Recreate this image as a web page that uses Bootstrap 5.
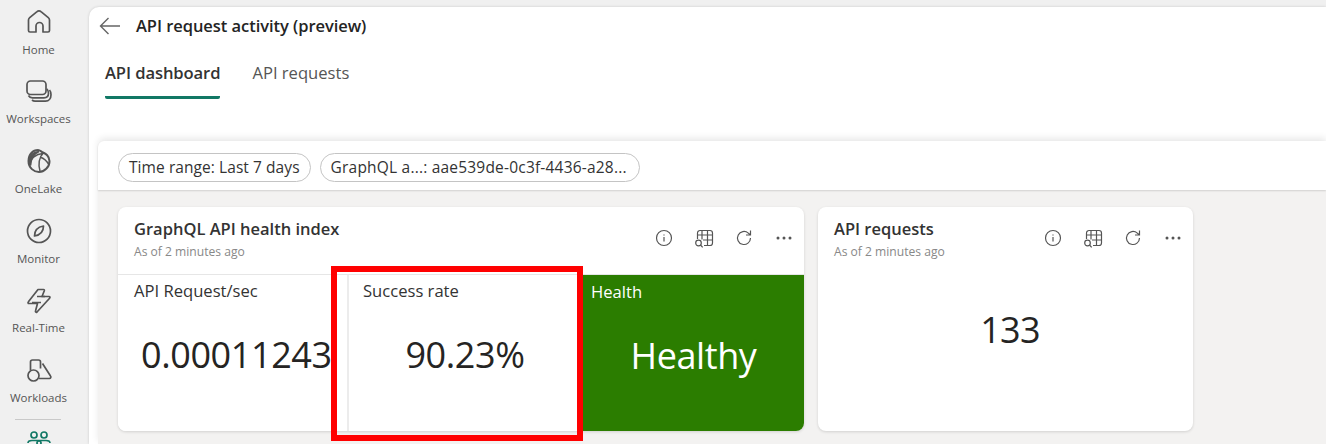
<!DOCTYPE html>
<html lang="en">
<head>
<meta charset="utf-8">
<title>API request activity</title>
<link href="https://cdn.jsdelivr.net/npm/bootstrap@5.3.0/dist/css/bootstrap.min.css" rel="stylesheet">
<style>
html,body{height:444px;overflow:hidden}
body{background:#f0f0f0;font-family:"Open Sans","Noto Sans",sans-serif;color:#242424;position:relative}
.shell{height:444px}
.rail{width:89px;flex:none;overflow:hidden}
.rail-item{height:69.7px;width:77px;color:#555;flex:none}
.rail-item svg{width:30px;height:30px;margin-top:7px;stroke:#555;fill:none;stroke-width:1.7;flex:none}
.rail-item span{font-size:11.5px;line-height:14px;margin-top:5.500px;white-space:nowrap}
.rail-rule{width:46px;height:1px;background:#c9c9c9;margin:1px 0 10px 15px;flex:none}
.rail-people svg{margin-top:0;stroke:#117865;width:24px;height:24px}
.content{min-width:0;margin-top:7px;background:#fff;border-top-left-radius:10px;box-shadow:0 0 3px rgba(0,0,0,.16)}
.head{height:125px}
.title-row{padding:9px 0 0 10px;height:52px}
.title-row svg{width:22px;height:20px;stroke:#666;fill:none;stroke-width:1.4}
.title-row h1{font-size:16.5px;font-weight:600;margin:0 0 0 15px;line-height:20px;letter-spacing:-.05px}
.tabs-row{padding-left:16px;gap:32px}
.tab-item{font-size:16.6px;line-height:21px;padding:3px 0 13px;color:#555}
.tab-on{font-weight:600;color:#333;border-bottom:3px solid #117865;border-radius:0 0 2px 2px;letter-spacing:-.1px}
.dash{margin:9px 0 0 9px;background:#f3f2f1;height:303px;border-top-left-radius:6px;box-shadow:0 -3px 7px rgba(0,0,0,.09)}
.filters{background:#fff;height:49px;padding:12px 0 0 20px;gap:10px;border-top-left-radius:6px;box-shadow:0 1px 2px rgba(0,0,0,.14)}
.chip{height:29px;border:1px solid #c4c4c4;border-radius:15px;font-size:15.5px;line-height:27px;padding:0 10px;color:#333;white-space:nowrap;letter-spacing:.07px}
.chip-long{width:320px;letter-spacing:.2px;margin-left:-1px}
.tiles{padding:17px 0 0 20px;gap:14px}
.pane{background:#fff;border-radius:8px;height:224px;box-shadow:0 1px 3px rgba(0,0,0,.14);overflow:hidden}
.pane-a{width:686px}
.pane-b{width:375px}
.pane-head{height:67px;padding:11px 9px 0 16px}
.pane-head h2{font-size:16.5px;font-weight:600;margin:0;line-height:21px;color:#333}
.pane-head small{display:block;font-size:12.1px;line-height:14px;color:#888;margin-top:6px}
.tools{gap:18px;margin-top:9px}
.tools svg{width:22px;height:22px;stroke:#555;fill:none;stroke-width:1.2}
.cells{height:157px;border-top:1px solid #e6e6e6}
.cell{width:229px;padding:6px 0 0 16px;background:#fff;flex:none}
.cell-mid{border-left:2px solid #ececec;width:230px;padding-left:14px}
.cell-good{background:#2b7d00;color:#fff;flex:1 1 auto;width:auto;padding-left:14px;padding-top:7px}
.cell-name{font-size:16.6px;line-height:20px;color:#333}
.cell-good .cell-name{color:#fff}
.cell-val{font-size:36px;line-height:46px;text-align:center;margin-top:31px;color:#252423;white-space:nowrap;letter-spacing:-.4px;padding-right:10px}
.cell-first .cell-val{text-align:left;padding-left:7px}
.cell-good .cell-val{color:#fff;padding-right:8px}
.count{font-size:36px;line-height:46px;text-align:center;margin-top:33px;color:#252423;padding-left:9px;letter-spacing:-.7px}
.callout{position:absolute;left:331px;top:266px;width:252px;height:175px;border:6px solid #f00;pointer-events:none}
</style>
</head>
<body>
<div class="shell d-flex">
  <nav class="rail d-flex flex-column">
    <div class="rail-item d-flex flex-column align-items-center"><svg viewBox="0 0 30 30"><path d="M4.500 13c0-1 .5-1.800 1.200-2.400l7-5.800a3.500 3.500 0 0 1 4.600 0l7 5.800c.7.600 1.200 1.400 1.200 2.400v10.500c0 1-.8 1.500-1.500 1.500h-5v-6a3.500 3.500 0 0 0-7 0v6H6c-.7 0-1.500-.5-1.500-1.500z" stroke-linejoin="round"/></svg><span>Home</span></div>
    <div class="rail-item d-flex flex-column align-items-center"><svg viewBox="0 0 30 30"><rect x="3" y="4" width="19" height="13.500" rx="3.500"/><path d="M4.500 18.500c.8 1.500 2 2.300 4 2.300H20c3 0 4.500-2 4.500-4.500 0-2-.5-3.500-1.800-4.500M8 23c.8.700 2 1.200 3 1.200h10.500c3.500 0 5.500-3 5.500-6.500 0-2-.5-3.500-1.500-4.700"/></svg><span>Workspaces</span></div>
    <div class="rail-item d-flex flex-column align-items-center"><svg viewBox="0 0 30 30"><path d="M14 4c2 0 3 1.500 5 2.500 3 1.500 6 3 6.500 8.500.3 6-5.500 11-10.500 11S4.500 22 4.500 15 9 4 14 4z" stroke-linejoin="round" stroke-width="2"/><path d="M6 19c0-7 6-11 13-11.500-4 3.500-5 11-3 17.500M16 11c3 1 7 4 9 8" stroke-width="1.500"/><path d="M5 14c1-5 5-8 10-8.500-5 2-8 6-8.500 14z" fill="#555"/></svg><span>OneLake</span></div>
    <div class="rail-item d-flex flex-column align-items-center"><svg viewBox="0 0 30 30"><circle cx="15" cy="15" r="11.500"/><path d="M10.500 20c0-5 3-9 9-10 0 5-3 9-9 10z" stroke-linejoin="round"/></svg><span>Monitor</span></div>
    <div class="rail-item d-flex flex-column align-items-center"><svg viewBox="0 0 30 30"><path d="M14 3.500h5.500c.8 0 1 .6.800 1.200L18 10.500h7c1 0 1.300 1 .6 1.700L13 26c-.8.700-1.800 0-1.500-1l2-7.500H5c-1 0-1.300-1-.6-1.700z" stroke-linejoin="round"/><path d="M8 16.500h9M13 10.500h8" stroke-width="1.300"/></svg><span>Real-Time</span></div>
    <div class="rail-item d-flex flex-column align-items-center"><svg viewBox="0 0 30 30"><circle cx="9.500" cy="20.500" r="5.500"/><path d="M6.500 15.500V7a2 2 0 0 1 2-2h6a2 2 0 0 1 2 2v6.500"/><path d="m18.500 8.500 8 12.500a1.500 1.500 0 0 1-1.200 2.500H15" stroke-linejoin="round"/></svg><span>Workloads</span></div>
    <div class="rail-rule"></div>
    <div class="rail-item rail-people d-flex flex-column align-items-center"><svg viewBox="0 0 24 24"><circle cx="7" cy="5" r="3"/><circle cx="17" cy="5" r="3"/><path d="M1 13c0-2 2-2.500 4-2.500h14c2 0 4 .5 4 2.500"/><circle cx="12" cy="13" r="2"/></svg></div>
  </nav>
  <main class="content flex-grow-1">
    <header class="head">
      <div class="title-row d-flex align-items-start">
        <svg viewBox="0 0 22 20"><path d="M21 10H1.500M9.500 2 1.500 10l8 8"/></svg>
        <h1>API request activity (preview)</h1>
      </div>
      <div class="tabs-row d-flex align-items-start">
        <div class="tab-item tab-on">API dashboard</div>
        <div class="tab-item">API requests</div>
      </div>
    </header>
    <section class="dash">
      <div class="filters d-flex align-items-start">
        <div class="chip">Time range: Last 7 days</div>
        <div class="chip chip-long">GraphQL a...: aae539de-0c3f-4436-a28...</div>
      </div>
      <div class="tiles d-flex align-items-start">
        <article class="pane pane-a">
          <div class="pane-head d-flex justify-content-between align-items-start">
            <div><h2>GraphQL API health index</h2><small>As of 2 minutes ago</small></div>
            <div class="tools d-flex">
              <svg viewBox="0 0 22 22"><circle cx="11" cy="11" r="7.500"/><path d="M11 10v4.500M11 7.500v1"/></svg>
              <svg viewBox="0 0 22 22"><path d="M4.500 12V6a2.500 2.500 0 0 1 2.500-2.500h10A2.500 2.500 0 0 1 19.500 6v10a2.500 2.500 0 0 1-2.500 2.500h-6M4.500 8h15M10 13h9.500M9 3.500v9M14.500 3.500v15"/><circle cx="5.500" cy="16" r="2.800"/><path d="m7.500 18 2.200 2.300"/></svg>
              <svg viewBox="0 0 22 22"><path d="M17.500 11a6.500 6.500 0 1 1-2.200-4.900L17.500 8M17.500 3.500V8H13"/></svg>
              <svg viewBox="0 0 22 22"><circle cx="5" cy="11" r="1.500" fill="#555" stroke="none"/><circle cx="11" cy="11" r="1.500" fill="#555" stroke="none"/><circle cx="17" cy="11" r="1.500" fill="#555" stroke="none"/></svg>
            </div>
          </div>
          <div class="cells d-flex">
            <div class="cell cell-first"><div class="cell-name">API Request/sec</div><div class="cell-val">0.00011243</div></div>
            <div class="cell cell-mid"><div class="cell-name">Success rate</div><div class="cell-val">90.23%</div></div>
            <div class="cell cell-good"><div class="cell-name">Health</div><div class="cell-val">Healthy</div></div>
          </div>
        </article>
        <article class="pane pane-b">
          <div class="pane-head d-flex justify-content-between align-items-start">
            <div><h2>API requests</h2><small>As of 2 minutes ago</small></div>
            <div class="tools d-flex">
              <svg viewBox="0 0 22 22"><circle cx="11" cy="11" r="7.500"/><path d="M11 10v4.500M11 7.500v1"/></svg>
              <svg viewBox="0 0 22 22"><path d="M4.500 12V6a2.500 2.500 0 0 1 2.500-2.500h10A2.500 2.500 0 0 1 19.500 6v10a2.500 2.500 0 0 1-2.500 2.500h-6M4.500 8h15M10 13h9.500M9 3.500v9M14.500 3.500v15"/><circle cx="5.500" cy="16" r="2.800"/><path d="m7.500 18 2.200 2.300"/></svg>
              <svg viewBox="0 0 22 22"><path d="M17.500 11a6.500 6.500 0 1 1-2.200-4.900L17.500 8M17.500 3.500V8H13"/></svg>
              <svg viewBox="0 0 22 22"><circle cx="5" cy="11" r="1.500" fill="#555" stroke="none"/><circle cx="11" cy="11" r="1.500" fill="#555" stroke="none"/><circle cx="17" cy="11" r="1.500" fill="#555" stroke="none"/></svg>
            </div>
          </div>
          <div class="count">133</div>
        </article>
      </div>
    </section>
  </main>
</div>
<div class="callout"></div>
<script src="https://cdn.jsdelivr.net/npm/bootstrap@5.3.0/dist/js/bootstrap.bundle.min.js"></script>
</body>
</html>
